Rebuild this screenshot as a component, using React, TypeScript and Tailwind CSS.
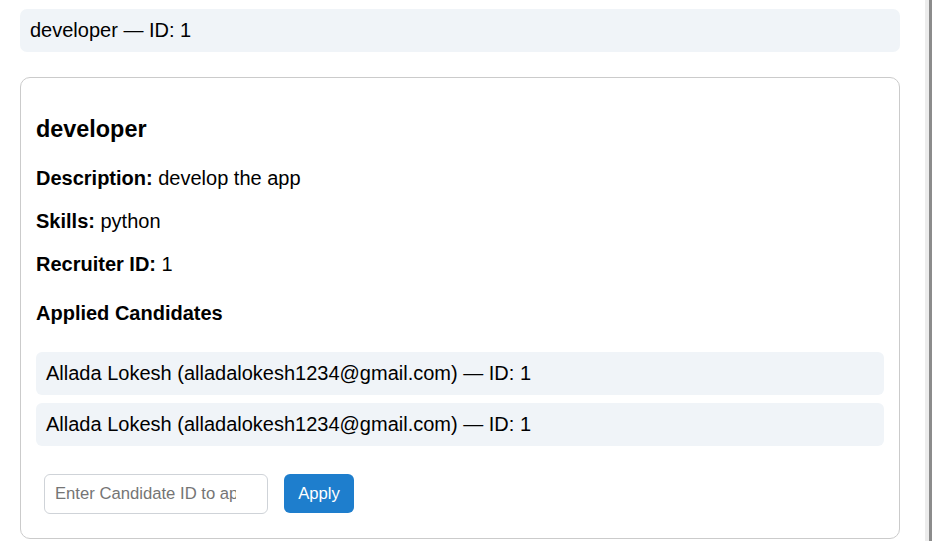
import { FC } from "react";

interface Candidate {
    id: number;
    name: string;
    email: string;
}

const candidates: Candidate[] = [
    { id: 1, name: "Allada Lokesh", email: "alladalokesh1234@gmail.com" },
    { id: 1, name: "Allada Lokesh", email: "alladalokesh1234@gmail.com" },
];

const JobCard: FC = () => {
    return (
        <section className="mt-[25px] rounded-[10px] border border-[#cbcbcb] px-[15px] pt-[15px] pb-[15px]">
            <h3 className="mt-[23.4px] text-[23.4px] font-bold leading-[27px]">developer</h3>
            <p className="mt-[23.4px] leading-[23px]"><b>Description:</b> develop the app</p>
            <p className="mt-[20px] leading-[23px]"><b>Skills:</b> python</p>
            <p className="mt-[20px] leading-[23px]"><b>Recruiter ID:</b> 1</p>
            <h4 className="mt-[26.6px] font-bold leading-[23px]">Applied Candidates</h4>
            <ul className="mt-[26.6px] flex flex-col gap-[8px]">
                {candidates.map((c, index) => (
                    <li key={index} className="rounded-[6px] bg-[#f0f4f8] px-[10px] py-[10px] leading-[23px]">
                        {c.name} ({c.email}) — ID: {c.id}
                    </li>
                ))}
            </ul>
            <div className="mt-[28px] mb-[9px] flex items-center">
                <input
                    type="text"
                    placeholder="Enter Candidate ID to apply"
                    className="ml-[8px] h-[40px] w-[224px] rounded-[6px] border border-[#cfd3d8] pl-[10px] pr-[31px] text-[16.67px] outline-none placeholder:text-[#757575]"
                />
                <button className="ml-[16px] h-[39px] w-[70px] rounded-[6px] bg-[#1e7ecd] text-[16.67px] text-white">
                    Apply
                </button>
            </div>
        </section>
    );
};

export default function App() {
    return (
        <div className="flex min-h-screen bg-white font-['Liberation_Sans',Arial,sans-serif] text-[20px] text-black">
            <main className="w-[920px] px-5 pt-[9px]">
                <div className="rounded-[7px] bg-[#f0f4f8] px-[10px] py-[10px] leading-[23px]">
                    developer — ID: 1
                </div>
                <JobCard />
            </main>
            {/* scrollbar edge */}
            <div className="w-[5px] bg-white" />
            <div className="w-[4px] bg-[#ececec]" />
            <div className="w-[3px] bg-[#8c8c8c]" />
        </div>
    );
}
